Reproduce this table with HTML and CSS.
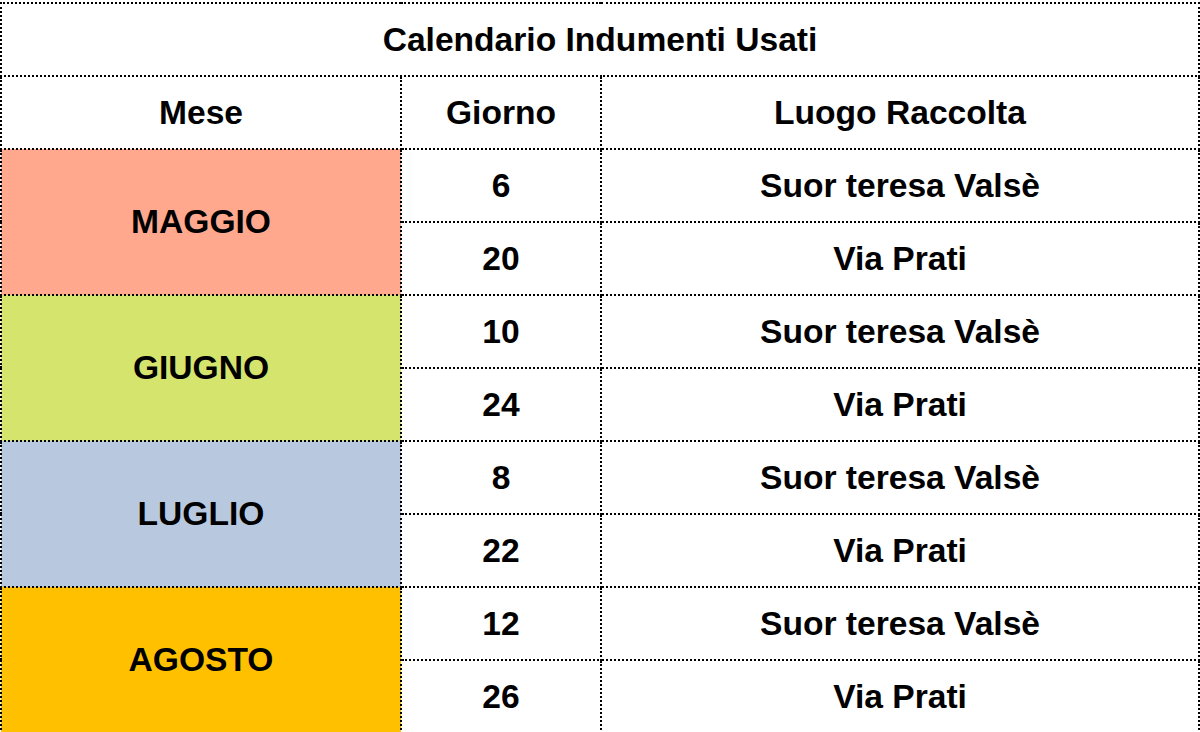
FILE: index.html
```html
<!DOCTYPE html>
<html lang="it">
<head>
<meta charset="utf-8">
<title>Calendario Indumenti Usati</title>
<link rel="stylesheet" href="styles.css">
</head>
<body>
<table class="cal">
  <colgroup>
    <col class="c-mese">
    <col class="c-giorno">
    <col class="c-luogo">
  </colgroup>
  <tr class="r-title"><td colspan="3">Calendario Indumenti Usati</td></tr>
  <tr class="r-head"><td>Mese</td><td>Giorno</td><td>Luogo Raccolta</td></tr>
  <tr><td rowspan="2" class="m-maggio">MAGGIO</td><td>6</td><td>Suor teresa Valsè</td></tr>
  <tr><td>20</td><td>Via Prati</td></tr>
  <tr><td rowspan="2" class="m-giugno">GIUGNO</td><td>10</td><td>Suor teresa Valsè</td></tr>
  <tr><td>24</td><td>Via Prati</td></tr>
  <tr><td rowspan="2" class="m-luglio">LUGLIO</td><td>8</td><td>Suor teresa Valsè</td></tr>
  <tr><td>22</td><td>Via Prati</td></tr>
  <tr><td rowspan="2" class="m-agosto">AGOSTO</td><td>12</td><td>Suor teresa Valsè</td></tr>
  <tr><td>26</td><td>Via Prati</td></tr>
</table>
</body>
</html>
```
FILE: styles.css
```css
html, body {
  margin: 0;
  padding: 0;
  background: #ffffff;
}
body {
  padding: 2px 0 0 0;
  overflow: hidden;
}
.cal {
  border-collapse: collapse;
  table-layout: fixed;
  width: 1198px;
  font-family: "Liberation Sans", Arial, sans-serif;
  font-weight: bold;
  font-size: 33.6px;
  color: #000;
}
.c-mese { width: 400px; }
.c-giorno { width: 200px; }
.c-luogo { width: 598px; }
.cal td {
  border: 2px dotted #000;
  text-align: center;
  vertical-align: middle;
  padding: 0;
  height: 71px;
  line-height: 1;
}
.cal .r-title td { height: 71px; }
.m-maggio { background: #ffa88e; }
.m-giugno { background: #d4e46c; }
.m-luglio { background: #b8c9df; }
.m-agosto { background: #ffc000; }
```
